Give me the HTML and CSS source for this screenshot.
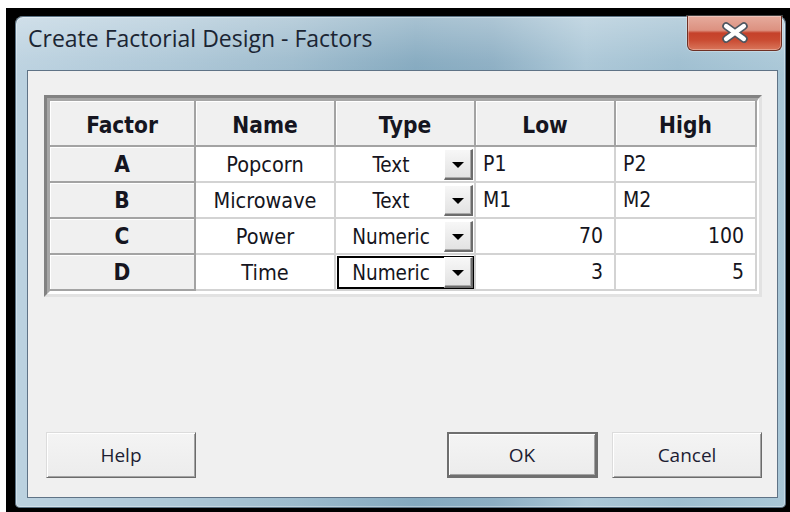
FILE: index.html
```html
<!DOCTYPE html>
<html lang="en">
<head>
<meta charset="utf-8">
<title>Create Factorial Design - Factors</title>
<link rel="stylesheet" href="styles.css">
</head>
<body>
<div class="backdrop">
  <div class="window">
    <div class="titlebar">
      <span class="title">Create Factorial Design - Factors</span>
      <button class="close" aria-label="Close">
        <svg class="close-glyph" width="95" height="34" viewBox="0 0 95 34">
          <path d="M39 10 L57 23 M57 10 L39 23" stroke="#4d5660" stroke-width="8" stroke-linecap="round" fill="none"/>
          <path d="M39 10 L57 23 M57 10 L39 23" stroke="#ffffff" stroke-width="4.6" stroke-linecap="round" fill="none"/>
        </svg>
      </button>
    </div>

    <div class="client">
      <div class="grid-frame">
        <div class="grid">
          <div class="hd">Factor</div>
          <div class="hd">Name</div>
          <div class="hd">Type</div>
          <div class="hd">Low</div>
          <div class="hd">High</div>

          <div class="rh">A</div>
          <div class="cell center">Popcorn</div>
          <div class="cell type"><div class="combo"><span class="combo-text">Text</span><span class="drop"><span class="tri"></span></span></div></div>
          <div class="cell left">P1</div>
          <div class="cell left">P2</div>

          <div class="rh">B</div>
          <div class="cell center">Microwave</div>
          <div class="cell type"><div class="combo"><span class="combo-text">Text</span><span class="drop"><span class="tri"></span></span></div></div>
          <div class="cell left">M1</div>
          <div class="cell left">M2</div>

          <div class="rh">C</div>
          <div class="cell center">Power</div>
          <div class="cell type"><div class="combo"><span class="combo-text">Numeric</span><span class="drop"><span class="tri"></span></span></div></div>
          <div class="cell right">70</div>
          <div class="cell right">100</div>

          <div class="rh">D</div>
          <div class="cell center">Time</div>
          <div class="cell type"><div class="combo focused"><span class="combo-text">Numeric</span><span class="drop"><span class="tri"></span></span></div></div>
          <div class="cell right">3</div>
          <div class="cell right">5</div>
        </div>
      </div>

      <div class="buttons">
        <button class="btn">Help</button>
        <span class="spacer"></span>
        <button class="btn default">OK</button>
        <button class="btn">Cancel</button>
      </div>
    </div>
  </div>
</div>
</body>
</html>
```

FILE: styles.css
```css
html, body {
  margin: 0;
  background: #ffffff;
  overflow: hidden;
}

/* black surround the window sits on */
.backdrop {
  margin: 8px 0 0 6px;
  padding: 8px 4px 4px 9px;
  background: #000000;
}

/* Aero-style window frame */
.window {
  width: 771px;
  height: 492px;
  box-sizing: border-box;
  border-radius: 8px 8px 5px 5px;
  display: flex;
  flex-direction: column;
  background:
    linear-gradient(180deg, rgba(255,255,255,0.30) 0, rgba(255,255,255,0.05) 44px, rgba(255,255,255,0) 60px),
    linear-gradient(90deg, #bcd2e0 0%, #adc7d7 20%, #9dbbcd 36%, #84a9bf 52%, #8caec3 62%, #abc7d7 74%, #9ebed0 86%, #a9c7d7 100%);
  box-shadow: inset 0 0 0 1px #5a7284, inset 0 0 0 2px rgba(255,255,255,0.35);
}

.titlebar {
  height: 54px;
  display: flex;
  align-items: flex-start;
  padding-left: 13px;
}

.title {
  margin-top: 7px;
  font-family: "Open Sans", "Noto Sans", sans-serif;
  font-size: 23px;
  line-height: 31px;
  color: #1b2533;
}

.close {
  margin-left: auto;
  margin-right: 4px;
  width: 95px;
  height: 35px;
  padding: 0;
  border: 1px solid #6e3024;
  border-top: none;
  border-radius: 0 0 6px 6px;
  background: linear-gradient(180deg, #e6ab9d 0%, #dc9180 42%, #c5412a 50%, #c94a31 70%, #d9765b 100%);
  box-shadow: inset 0 0 0 1px rgba(255,255,255,0.3), 0 0 0 1px rgba(255,255,255,0.25);
  display: flex;
}

.close-glyph {
  display: block;
}

/* dialog body */
.client {
  margin: 0 8px 0 12px;
  height: 428px;
  box-sizing: border-box;
  border: 1px solid #5f7386;
  background: #f0f0f0;
  padding: 24px 15px 0 16px;
  display: flex;
  flex-direction: column;
  font-family: "DejaVu Sans Condensed", "DejaVu Sans", sans-serif;
  color: #151520;
}

/* sunken frame around the factor table */
.grid-frame {
  width: 718px;
  box-sizing: border-box;
  border: 3px solid;
  border-color: #828282 #e2e2e2 #e2e2e2 #828282;
}

.grid {
  display: grid;
  grid-template-columns: 146px 140px 140px 140px 141px;
  grid-template-rows: 46px repeat(4, 36px);
  border-style: solid;
  border-width: 3px 2px 3px 3px;
  border-color: #a6a6a6 #ffffff #ffffff #a6a6a6;
  background: #ffffff;
}

.hd,
.rh {
  box-sizing: border-box;
  background: #f0f0f0;
  border-right: 2px solid #a3a3a3;
  border-bottom: 2px solid #a3a3a3;
  box-shadow: inset 1px 1px 0 #ffffff;
  display: flex;
  align-items: center;
  justify-content: center;
  font-weight: bold;
  font-size: 22.5px;
}

.hd {
  padding-top: 3px;
}

.cell {
  box-sizing: border-box;
  background: #ffffff;
  border-right: 2px solid #d3d3d3;
  border-bottom: 2px solid #d3d3d3;
  display: flex;
  align-items: center;
  font-size: 21.5px;
}

.cell.center {
  justify-content: center;
}

.cell.left {
  padding-left: 7px;
  font-size: 21px;
}

.cell.right {
  justify-content: flex-end;
  padding-right: 11px;
  font-size: 21px;
}

.cell.type {
  align-items: stretch;
  font-size: 20.5px;
}

/* drop-down list inside the Type column */
.combo {
  flex: 1;
  margin: 1px 0 0 1px;
  border: 1px solid transparent;
  display: flex;
  align-items: center;
}

.combo.focused {
  border-color: #000000;
  box-shadow: inset 1px 1px 0 #000000, inset -1px -1px 0 #000000;
}

.combo-text {
  flex: 1;
  text-align: center;
}

.drop {
  width: 29px;
  height: 31px;
  box-sizing: border-box;
  border-style: solid;
  border-width: 1px 2px 2px 1px;
  border-color: #ffffff #6c6c6c #6c6c6c #ffffff;
  background: linear-gradient(180deg, #f7f7f7, #e2e2e2);
  box-shadow: inset -1px -1px 0 #a9a9a9;
  display: flex;
  align-items: center;
  justify-content: center;
}

.tri {
  width: 0;
  height: 0;
  border-left: 6px solid transparent;
  border-right: 6px solid transparent;
  border-top: 6px solid #000000;
  margin-top: 1px;
}

/* bottom row of push buttons */
.buttons {
  margin-top: auto;
  display: flex;
  gap: 14px;
  padding: 0 0 19px 2px;
}

.spacer {
  flex: 1;
}

.btn {
  width: 150px;
  height: 46px;
  box-sizing: border-box;
  padding: 0;
  font-family: "Open Sans", "Noto Sans", sans-serif;
  font-size: 19px;
  color: #1d1d33;
  background: linear-gradient(180deg, #f4f4f4, #ececec);
  border-style: solid;
  border-width: 1px;
  border-color: #dcdcdc #6b6b6b #6b6b6b #dcdcdc;
  box-shadow: inset 1px 1px 0 #ffffff, inset -1px -1px 0 #a3a3a3;
}

.btn.default {
  width: 151px;
  border: 2px solid #6f6f6f;
  border-right-width: 3px;
  border-bottom-width: 3px;
  box-shadow: inset 1px 1px 0 #ffffff, inset -1px -1px 0 #a3a3a3;
}
```
